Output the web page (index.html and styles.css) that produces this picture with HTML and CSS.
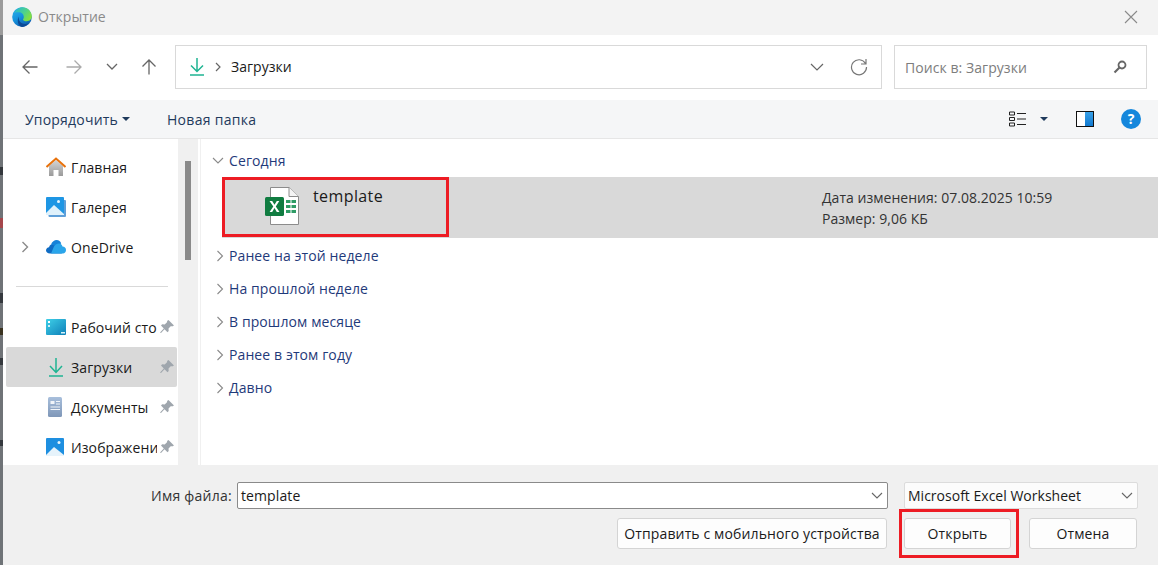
FILE: index.html
```html
<!DOCTYPE html>
<html lang="ru">
<head>
<meta charset="utf-8">
<title>Открытие</title>
<link rel="stylesheet" href="styles.css">
</head>
<body>
<div class="backdrop"></div>
<div class="dialog">
  <header class="titlebar">
    <svg class="edge" viewBox="0 0 20 20" width="20" height="20">
      <defs>
        <linearGradient id="eg1" x1="0" y1="0" x2=".6" y2="1"><stop offset="0" stop-color="#2fb4ec"/><stop offset=".55" stop-color="#1592dc"/><stop offset="1" stop-color="#0d5fb0"/></linearGradient>
        <linearGradient id="eg2" x1="0" y1="0" x2="1" y2=".6"><stop offset="0" stop-color="#1fb5dc"/><stop offset=".6" stop-color="#4fd28a"/><stop offset="1" stop-color="#86e03c"/></linearGradient>
      </defs>
      <circle cx="10" cy="10" r="9.800" fill="url(#eg1)"/>
      <path d="M2 6C4 2.200 7.500.2 10.500.2c5.200 0 9.300 4.300 9.300 9.300 0 2.700-2.200 4.700-5.200 4.700-2 0-3.600-.8-3.600-1.800 0-.5.8-.9.8-2.500 0-2.600-2.300-4.600-4.800-4.600C5 5.300 3.300 5.300 2 6z" fill="url(#eg2)"/>
      <path d="M6.800 9.500c-.8 3.500 1.800 7.500 6 7.500 1.500 0 2.800-.4 3.700-1-1.500 2.500-4 4-6.500 4C8 19.800 6.500 18 6 15.500c-.4-2.200-.2-4.500.8-6z" fill="#0b4a96"/>
    </svg>
    <span class="title">Открытие</span>
    <svg class="close" viewBox="0 0 14 14" width="14" height="14"><path d="M1 1l12 12M13 1L1 13" stroke="#8a8a8a" stroke-width="1.100" fill="none"/></svg>
  </header>

  <nav class="navbar">
    <svg class="nav-icon" viewBox="0 0 18 18" width="18" height="18"><path d="M16.500 9H2M8.500 2.500L2 9l6.500 6.500" stroke="#666" stroke-width="1.300" fill="none"/></svg>
    <svg class="nav-icon nav-fwd" viewBox="0 0 18 18" width="18" height="18"><path d="M1.500 9H16M9.500 2.500L16 9l-6.500 6.500" stroke="#ababab" stroke-width="1.300" fill="none"/></svg>
    <svg class="nav-icon nav-down" viewBox="0 0 12 8" width="12" height="8"><path d="M1 1l5 5 5-5" stroke="#666" stroke-width="1.300" fill="none"/></svg>
    <svg class="nav-icon nav-up" viewBox="0 0 18 18" width="18" height="18"><path d="M9 16.500V2M2.500 8.500L9 2l6.500 6.500" stroke="#666" stroke-width="1.300" fill="none"/></svg>
    <div class="addressbar">
      <svg class="dl" viewBox="0 0 16 18" width="16" height="18"><path d="M8 0v13M2 7.500L8 13.500l6-6M1 17h14" stroke="#1fb492" stroke-width="1.500" fill="none"/></svg>
      <svg class="crumb" viewBox="0 0 6 10" width="6" height="10"><path d="M1 1l4 4-4 4" stroke="#666" stroke-width="1.200" fill="none"/></svg>
      <span class="addr-text">Загрузки</span>
      <svg class="addr-drop" viewBox="0 0 14 8" width="14" height="8"><path d="M1 1l6 6 6-6" stroke="#666" stroke-width="1.200" fill="none"/></svg>
      <svg class="refresh" viewBox="0 0 18 18" width="18" height="18"><path d="M15.500 5.500A7.500 7.500 0 1 0 16.500 9M16 1v5h-5" stroke="#777" stroke-width="1.200" fill="none"/></svg>
    </div>
    <div class="searchbox">
      <span class="search-text">Поиск в: Загрузки</span>
      <svg class="search-icon" viewBox="0 0 14 14" width="14" height="14"><circle cx="9" cy="5" r="3.500" stroke="#666" stroke-width="1.800" fill="none"/><path d="M6.500 7.500L1.500 12.500" stroke="#666" stroke-width="2.200"/></svg>
    </div>
  </nav>

  <div class="toolbar">
    <span class="tool-btn">Упорядочить</span>
    <i class="caret"></i>
    <span class="tool-btn new-folder">Новая папка</span>
    <div class="tool-right">
      <svg class="view" viewBox="0 0 18 16" width="18" height="16"><path d="M.5 1h5v3h-5zM.5 6.500h5v3h-5zM.5 12h5v3h-5z" stroke="#222" fill="none"/><path d="M8 2.500h9M8 8h9M8 13.500h9" stroke="#222"/></svg>
      <i class="caret caret-dark"></i>
      <span class="pane"><span class="pane-fill"></span></span>
      <span class="help">?</span>
    </div>
  </div>

  <div class="main">
    <aside class="sidebar">
      <ul class="tree">
        <li class="tree-row">
          <svg class="tree-icon" viewBox="0 0 20 20" width="20" height="20"><defs><linearGradient id="hb" x1="0" y1="0" x2="0" y2="1"><stop offset="0" stop-color="#d5d5d5"/><stop offset="1" stop-color="#9a9a9a"/></linearGradient></defs><path d="M3 9l7-6 7 6v10h-4.500v-6h-5v6H3z" fill="url(#hb)"/><path d="M.5 10L10 1.500 19.500 10" stroke="#e8720c" stroke-width="2" fill="none"/></svg>
          <span class="tree-label">Главная</span>
        </li>
        <li class="tree-row">
          <svg class="tree-icon" viewBox="0 0 20 20" width="20" height="20"><rect x="2.500" y="3" width="17.500" height="17" rx="1" fill="#5f9fd8"/><rect y="0" width="18" height="18" rx="1" fill="#1e96e4"/><path d="M0 16l8-8 10 9v1H0z" fill="#dff1fb"/><circle cx="12.500" cy="4.500" r="1.500" fill="#e8f6fd"/></svg>
          <span class="tree-label">Галерея</span>
        </li>
        <li class="tree-row">
          <svg class="tree-chev" viewBox="0 0 8 12" width="8" height="12"><path d="M1.500 1l5 5-5 5" stroke="#8a8a8a" stroke-width="1.400" fill="none"/></svg>
          <svg class="tree-icon" viewBox="0 0 20 14" width="20" height="14"><path d="M4 13.500C1.500 13.500 0 12 0 10.500 0 8.500 1.500 7.500 3 7.300 3.500 4.800 5.500 4 7 4c1.500 0 2 .5 3 1l6 8.500z" fill="#0f6cc4"/><path d="M5 4.500C6 1.500 8.500 0 10.500 0c2.500 0 4 1.500 4.700 3.500L10 6z" fill="#1682d8"/><path d="M8 6.500C9 4.500 11 3.500 13 3.500c1.500 0 3 1 3.500 3C18.500 6.500 20 8 20 10c0 2-1.500 3.500-3 3.500H5z" fill="#2aa5ea"/></svg>
          <span class="tree-label">OneDrive</span>
        </li>
        <li class="tree-sep"></li>
        <li class="tree-row">
          <svg class="tree-icon" viewBox="0 0 20 16" width="20" height="16"><defs><linearGradient id="dk" x1="0" y1="0" x2="1" y2="1"><stop offset="0" stop-color="#3fd0e8"/><stop offset="1" stop-color="#0e7fb8"/></linearGradient></defs><rect width="20" height="16" rx="1" fill="url(#dk)"/><rect x="2" y="2" width="2" height="2" fill="#fff"/><rect x="2" y="6" width="2" height="2" fill="#cdeff6"/><rect x="15" y="13" width="4" height="1.500" fill="#d5f1f7"/></svg>
          <span class="tree-label tree-label-clip">Рабочий сто</span>
          <svg class="pin" viewBox="0 0 14 14" width="14" height="14"><path d="M8.500 0l5.500 5.500-2 1-1-.5-2.500 2.500.2 2.500-1.200 1.200L4.500 9.200 1 13l-1-.5L3.800 8.500 1 5.500l1.200-1.200 2.500.2L7.200 2 7 1z" fill="#9fa6ad"/></svg>
        </li>
        <li class="tree-row tree-row-sel">
          <svg class="tree-icon tree-icon-sm" viewBox="0 0 16 20" width="16" height="20"><path d="M8 1v14M2 9l6 6.500L14 9M1 19h14" stroke="#1fb492" stroke-width="1.500" fill="none"/></svg>
          <span class="tree-label">Загрузки</span>
          <svg class="pin" viewBox="0 0 14 14" width="14" height="14"><path d="M8.500 0l5.500 5.500-2 1-1-.5-2.500 2.500.2 2.500-1.200 1.200L4.500 9.200 1 13l-1-.5L3.800 8.500 1 5.500l1.200-1.200 2.500.2L7.200 2 7 1z" fill="#9fa6ad"/></svg>
        </li>
        <li class="tree-row">
          <svg class="tree-icon tree-icon-sm" viewBox="0 0 14 20" width="14" height="20"><defs><linearGradient id="dc" x1="0" y1="0" x2="0" y2="1"><stop offset="0" stop-color="#a8bfdc"/><stop offset="1" stop-color="#7f97b8"/></linearGradient></defs><rect width="14" height="20" rx="1.500" fill="url(#dc)"/><path d="M2.500 4h4v3h-4zM8 4h4v1H8zM8 6.500h4v1H8zM2.500 9.500h9.500v1H2.500zM2.500 12h9.500v1H2.500z" fill="#f1f5fa"/></svg>
          <span class="tree-label">Документы</span>
          <svg class="pin" viewBox="0 0 14 14" width="14" height="14"><path d="M8.500 0l5.500 5.500-2 1-1-.5-2.500 2.500.2 2.500-1.200 1.200L4.500 9.200 1 13l-1-.5L3.800 8.500 1 5.500l1.200-1.200 2.500.2L7.200 2 7 1z" fill="#9fa6ad"/></svg>
        </li>
        <li class="tree-row">
          <svg class="tree-icon" viewBox="0 0 18 18" width="18" height="18"><rect width="18" height="18" rx="1" fill="#1e8fe0"/><path d="M0 17l8-8 10 8v1H0z" fill="#e6f3fb"/><circle cx="13" cy="4.500" r="1.500" fill="#e8f6fd"/></svg>
          <span class="tree-label tree-label-clip">Изображени</span>
          <svg class="pin" viewBox="0 0 14 14" width="14" height="14"><path d="M8.500 0l5.500 5.500-2 1-1-.5-2.500 2.500.2 2.500-1.200 1.200L4.500 9.200 1 13l-1-.5L3.800 8.500 1 5.500l1.200-1.200 2.500.2L7.200 2 7 1z" fill="#9fa6ad"/></svg>
        </li>
      </ul>
      <div class="scrollbar"><div class="thumb"></div></div>
    </aside>

    <section class="files">
      <div class="group group-open">
        <svg class="group-chev" viewBox="0 0 12 8" width="12" height="8"><path d="M1 1l5 5 5-5" stroke="#8a8a8a" stroke-width="1.100" fill="none"/></svg>
        <span class="group-label">Сегодня</span>
      </div>
      <div class="file-row">
        <svg class="xl" viewBox="0 0 34 38" width="34" height="38">
          <path d="M5.500 .5H24L33.500 9.500V37.500H5.500z" fill="#fff" stroke="#8c8c8c"/>
          <path d="M24 .5V9.500H33.500" fill="#f4f4f4" stroke="#8c8c8c"/>
          <path d="M21 13h10v3H21zM21 18h10v3H21zM21 23h10v3H21z" fill="#2f9c66"/>
          <path d="M26 13v13" stroke="#fff"/>
          <rect x="0" y="10" width="19" height="19" rx="1.500" fill="#107c41"/>
          <path d="M4.500 14h2.700l2.300 3.800L11.800 14h2.500l-3.500 5.400 3.700 5.600h-2.700l-2.300-3.900L7.200 25H4.600l3.700-5.600z" fill="#fff"/>
        </svg>
        <span class="file-name">template</span>
        <div class="file-meta">
          <span>Дата изменения: 07.08.2025 10:59</span>
          <span>Размер: 9,06 КБ</span>
        </div>
      </div>
      <div class="groups">
        <div class="group"><svg class="group-chev-r" viewBox="0 0 8 12" width="8" height="12"><path d="M1.500 1l5 5-5 5" stroke="#8a8a8a" stroke-width="1.100" fill="none"/></svg><span class="group-label">Ранее на этой неделе</span></div>
        <div class="group"><svg class="group-chev-r" viewBox="0 0 8 12" width="8" height="12"><path d="M1.500 1l5 5-5 5" stroke="#8a8a8a" stroke-width="1.100" fill="none"/></svg><span class="group-label">На прошлой неделе</span></div>
        <div class="group"><svg class="group-chev-r" viewBox="0 0 8 12" width="8" height="12"><path d="M1.500 1l5 5-5 5" stroke="#8a8a8a" stroke-width="1.100" fill="none"/></svg><span class="group-label">В прошлом месяце</span></div>
        <div class="group"><svg class="group-chev-r" viewBox="0 0 8 12" width="8" height="12"><path d="M1.500 1l5 5-5 5" stroke="#8a8a8a" stroke-width="1.100" fill="none"/></svg><span class="group-label">Ранее в этом году</span></div>
        <div class="group"><svg class="group-chev-r" viewBox="0 0 8 12" width="8" height="12"><path d="M1.500 1l5 5-5 5" stroke="#8a8a8a" stroke-width="1.100" fill="none"/></svg><span class="group-label">Давно</span></div>
      </div>
    </section>
  </div>

  <footer class="footer">
    <div class="footer-row">
      <span class="fname-label">Имя файла:</span>
      <div class="fname-input"><span>template</span><svg viewBox="0 0 12 7" width="12" height="7"><path d="M1 1l5 5 5-5" stroke="#666" stroke-width="1.100" fill="none"/></svg></div>
      <div class="ftype"><span>Microsoft Excel Worksheet</span><svg viewBox="0 0 12 7" width="12" height="7"><path d="M1 1l5 5 5-5" stroke="#666" stroke-width="1.100" fill="none"/></svg></div>
    </div>
    <div class="footer-row footer-btns">
      <span class="btn btn-mobile">Отправить с мобильного устройства</span>
      <span class="btn btn-open">Открыть</span>
      <span class="btn btn-cancel">Отмена</span>
    </div>
  </footer>
</div>
<div class="mark mark-file"></div>
<div class="mark mark-open"></div>
</body>
</html>
```
FILE: styles.css
```css
* { box-sizing: border-box; margin: 0; padding: 0; }
html, body { width: 1158px; height: 565px; overflow: hidden; }
body {
  position: relative;
  display: flex;
  font-family: "Open Sans", "Noto Sans", sans-serif;
  font-size: 14px;
  color: #1a1a1a;
  background: #fff;
}
svg { display: block; flex: none; }
.backdrop {
  width: 3px;
  flex: none;
  background: linear-gradient(#9b9b9b 0 35px, #6f7377 35px 167px, #33373c 167px 175px, #6f7377 175px 218px, #a5474c 218px 228px, #6f7377 228px 293px, #35393e 293px 303px, #6f7377 303px 328px, #3a3320 328px 335px, #6f7377 335px 358px, #35393e 358px 365px, #6f7377 365px 440px, #35393e 440px 446px, #6f7377 446px);
}
.dialog { flex: 1; display: flex; flex-direction: column; min-width: 0; }

.titlebar { height: 35px; background: #f3f3f3; display: flex; align-items: center; padding: 0 20px 2px 9px; flex: none; }
.title { margin-left: 6px; color: #8a8a8a; font-size: 14px; letter-spacing: .05px; }
.close { margin-left: auto; }

.navbar { height: 65px; background: #fff; display: flex; align-items: center; padding: 0 0 1px 18px; flex: none; }
.nav-fwd { margin-left: 26px; }
.nav-down { margin-left: 23px; }
.nav-up { margin-left: 22px; }
.addressbar {
  margin-left: 17px; width: 707px; height: 44px; border: 1px solid #d9d9d9;
  display: flex; align-items: center; padding-left: 13px;
}
.crumb { margin-left: 10px; }
.addr-text { margin-left: 10px; padding-bottom: 2px; font-size: 14px; letter-spacing: .03px; }
.addr-drop { margin-left: auto; }
.refresh { margin: 0 13px 0 26px; }
.searchbox {
  margin-left: 12px; width: 253px; height: 44px; border: 1px solid #d9d9d9;
  display: flex; align-items: center; padding: 0 19px 0 10px;
}
.search-text { color: #7d7d7d; font-size: 14px; letter-spacing: .06px; }
.search-icon { margin-left: auto; }

.toolbar { height: 39px; background: #f5f6f7; border-bottom: 1px solid #e6e6e6; display: flex; align-items: center; padding-left: 22px; flex: none; }
.tool-btn { color: #1f3a5c; font-size: 14px; letter-spacing: .2px; }
.caret { width: 0; height: 0; border: 4px solid transparent; border-top: 4px solid #1f3a5c; border-bottom: 0; margin-left: 4px; }
.new-folder { margin-left: 37px; letter-spacing: .29px; }
.tool-right { margin-left: auto; display: flex; align-items: center; padding-right: 17px; }
.caret-dark { margin-left: 13px; }
.pane { width: 18px; height: 16px; border: 1px solid #111; background: #fff; margin-left: 28px; display: flex; justify-content: flex-end; }
.pane-fill { width: 8px; background: linear-gradient(#39a1e8, #1079d0); }
.help { width: 20px; height: 20px; border-radius: 50%; background: #1587dc; color: #fff; font-weight: 700; font-size: 14px; line-height: 20px; text-align: center; margin-left: 27px; }

.main { flex: 1; display: flex; min-height: 0; }
.sidebar { width: 195px; display: flex; flex: none; background: #fff; }
.tree { list-style: none; width: 175px; padding-top: 8px; overflow: hidden; }
.tree-row { height: 40px; display: flex; align-items: center; position: relative; margin: 0 1px 0 3px; padding-left: 40px; border-radius: 2px; }
.tree-row-sel { background: #d9d9d9; }
.tree-icon { position: absolute; left: 40px; top: 50%; transform: translateY(-50%); }
.tree-icon-sm { left: 42px; }
.tree-chev { position: absolute; left: 15px; top: 14px; }
.tree-label { margin-left: 25px; font-size: 14px; letter-spacing: .1px; white-space: nowrap; }
.tree-label-clip { width: 86px; overflow: hidden; }
.pin { position: absolute; right: 3px; top: 13px; }
.tree-sep { height: 1px; background: #d9d9d9; margin: 19px 10px 20px 13px; }
.scrollbar { width: 20px; background: #f0f0f0; padding: 22px 7px 0; }
.thumb { width: 6px; height: 99px; background: #8a8a8a; }

.files { flex: 1; background: #fff; min-width: 0; margin-left: 2px; border-left: 1px solid #f0f0f0; padding-top: 5px; }
.group { height: 33px; display: flex; align-items: center; padding-left: 28px; position: relative; }
.group-chev { position: absolute; left: 11px; top: 13px; }
.group-chev-r { position: absolute; left: 15px; top: 11px; }
.group-label { color: #1f3a7a; font-size: 14px; letter-spacing: .1px; }
.file-row { height: 61px; margin-left: 21px; background: #d9d9d9; position: relative; }
.xl { position: absolute; left: 43px; top: 10px; }
.file-name { position: absolute; left: 91px; top: 8px; font-size: 16px; letter-spacing: .4px; }
.file-meta { position: absolute; left: 600px; top: 11px; display: flex; flex-direction: column; gap: 2px; font-size: 14px; letter-spacing: .03px; color: #333; line-height: 19px; }
.groups { padding-top: 1px; }

.footer { height: 100px; background: #f0f0f0; flex: none; padding-top: 17px; }
.footer-row { display: flex; align-items: center; }
.fname-label { margin-left: 148px; width: 86px; font-size: 14px; letter-spacing: .25px; color: #333; padding-bottom: 1px; }
.fname-input { width: 651px; height: 27px; background: #fff; border: 1px solid #8a8a8a; border-radius: 2px; display: flex; align-items: center; justify-content: space-between; padding: 0 4px 1px 3px; font-size: 14px; letter-spacing: .1px; }
.ftype { margin-left: 16px; width: 234px; height: 27px; background: #fcfcfc; border: 1px solid #dcdcdc; border-radius: 2px; display: flex; align-items: center; justify-content: space-between; padding: 0 4px 1px 3px; font-size: 14px; letter-spacing: .01px; }
.footer-btns { margin-top: 9px; padding-left: 614px; }
.btn { height: 31px; background: #fdfdfd; border: 1px solid #d4d4d4; border-radius: 3px; display: flex; align-items: center; justify-content: center; font-size: 14px; letter-spacing: .13px; white-space: nowrap; }
.btn-mobile { width: 270px; }
.btn-open { width: 107px; margin-left: 17px; }
.btn-cancel { width: 108px; margin-left: 18px; }

.mark { position: absolute; border: 3px solid #ed1c24; pointer-events: none; }
.mark-file { left: 222px; top: 177px; width: 227px; height: 60px; }
.mark-open { left: 899px; top: 509px; width: 120px; height: 49px; }
```
